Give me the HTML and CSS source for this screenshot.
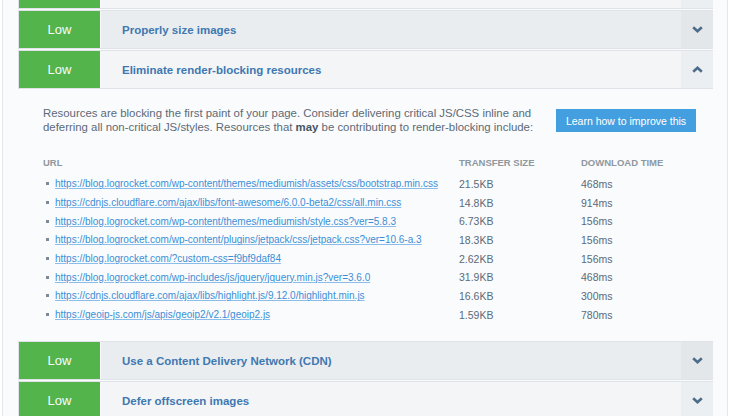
FILE: index.html
```html
<!DOCTYPE html>
<html>
<head>
<meta charset="utf-8">
<link rel="stylesheet" href="styles.css">
</head>
<body>
<div class="page">
  <div class="list">
    <div class="row light">
      <div class="badge"></div>
      <div class="title"></div>
      <div class="toggle"><svg width="11" height="7" viewBox="0 0 11 7"><polyline points="1.2,1.2 5.5,5.2 9.8,1.2" /></svg></div>
    </div>
    <div class="row shade">
      <div class="badge">Low</div>
      <div class="title">Properly size images</div>
      <div class="toggle"><svg width="11" height="7" viewBox="0 0 11 7"><polyline points="1.2,1.2 5.5,5.2 9.8,1.2" /></svg></div>
    </div>
    <div class="row light">
      <div class="badge">Low</div>
      <div class="title">Eliminate render-blocking resources</div>
      <div class="toggle"><svg width="11" height="7" viewBox="0 0 11 7"><polyline points="1.2,5.8 5.5,1.8 9.8,5.8" /></svg></div>
    </div>
    <div class="detail">
      <div class="intro">
        <p class="desc">Resources are blocking the first paint of your page. Consider delivering critical JS/CSS inline and deferring all non-critical JS/styles. Resources that <b>may</b> be contributing to render-blocking include:</p>
        <a class="learn">Learn how to improve this</a>
      </div>
      <div class="table">
        <div class="th">URL</div><div class="th">Transfer Size</div><div class="th">Download Time</div>
        <div class="url"><a>https://blog.logrocket.com/wp-content/themes/mediumish/assets/css/bootstrap.min.css</a></div><div class="num">21.5KB</div><div class="num">468ms</div>
        <div class="url"><a>https://cdnjs.cloudflare.com/ajax/libs/font-awesome/6.0.0-beta2/css/all.min.css</a></div><div class="num">14.8KB</div><div class="num">914ms</div>
        <div class="url"><a>https://blog.logrocket.com/wp-content/themes/mediumish/style.css?ver=5.8.3</a></div><div class="num">6.73KB</div><div class="num">156ms</div>
        <div class="url"><a>https://blog.logrocket.com/wp-content/plugins/jetpack/css/jetpack.css?ver=10.6-a.3</a></div><div class="num">18.3KB</div><div class="num">156ms</div>
        <div class="url"><a>https://blog.logrocket.com/?custom-css=f9bf9daf84</a></div><div class="num">2.62KB</div><div class="num">156ms</div>
        <div class="url"><a>https://blog.logrocket.com/wp-includes/js/jquery/jquery.min.js?ver=3.6.0</a></div><div class="num">31.9KB</div><div class="num">468ms</div>
        <div class="url"><a>https://cdnjs.cloudflare.com/ajax/libs/highlight.js/9.12.0/highlight.min.js</a></div><div class="num">16.6KB</div><div class="num">300ms</div>
        <div class="url"><a>https://geoip-js.com/js/apis/geoip2/v2.1/geoip2.js</a></div><div class="num">1.59KB</div><div class="num">780ms</div>
      </div>
    </div>
    <div class="row shade">
      <div class="badge">Low</div>
      <div class="title">Use a Content Delivery Network (CDN)</div>
      <div class="toggle"><svg width="11" height="7" viewBox="0 0 11 7"><polyline points="1.2,1.2 5.5,5.2 9.8,1.2" /></svg></div>
    </div>
    <div class="row light">
      <div class="badge">Low</div>
      <div class="title">Defer offscreen images</div>
      <div class="toggle"><svg width="11" height="7" viewBox="0 0 11 7"><polyline points="1.2,1.2 5.5,5.2 9.8,1.2" /></svg></div>
    </div>
  </div>
</div>
</body>
</html>
```

FILE: styles.css
```css
html, body {
  margin: 0;
  padding: 0;
  background: #ffffff;
  height: 100%;
  overflow: hidden;
}
body {
  font-family: "Liberation Sans", Arial, sans-serif;
}
.page {
  margin-left: 2px;
  width: 726px;
  min-height: 100%;
  border-left: 1px solid #e4e7ea;
  border-right: 1px solid #e4e7ea;
  background: #fafbfc;
  padding: 0 14px 0 15px;
  box-sizing: border-box;
}
.list {
  margin-top: -30px;
  display: flex;
  flex-direction: column;
  gap: 1px;
}
.row {
  display: flex;
  height: 39px;
  box-sizing: border-box;
  border: 1px solid #dfe3e7;
  border-right: none;
  background: #fafbfc;
}
.badge {
  width: 81px;
  background: #52b44b;
  color: #fbfbff;
  font-size: 13px;
  display: flex;
  align-items: center;
  justify-content: center;
  margin-right: 1px;
}
.title {
  flex: 1;
  display: flex;
  align-items: center;
  padding-left: 21px;
  font-size: 11.5px;
  font-weight: bold;
  color: #3f78b1;
}
.toggle {
  width: 32px;
  display: flex;
  align-items: center;
  justify-content: center;
}
.toggle svg polyline {
  fill: none;
  stroke: #4d6c89;
  stroke-width: 2.6;
  stroke-linecap: butt;
  stroke-linejoin: miter;
}
.shade .title { background: #eaedf0; }
.shade .toggle { background: #e3e7ea; }
.light .title { background: #f3f5f7; }
.light .toggle { background: #eceff1; }

.detail {
  padding: 16px 17px 16px 25px;
  height: 218px;
}
.intro {
  display: flex;
  justify-content: space-between;
  align-items: flex-start;
}
.desc {
  margin: 0;
  width: 495px;
  font-size: 11.4px;
  line-height: 14px;
  color: #5b6a78;
}
.desc b { color: #455564; }
.learn {
  flex: none;
  margin-top: 3px;
  width: 140px;
  height: 23px;
  background: #449fe0;
  color: #ffffff;
  font-size: 10.5px;
  display: flex;
  align-items: center;
  justify-content: center;
}
.table {
  margin-top: 22px;
  display: grid;
  grid-template-columns: 416px 122px 1fr;
  grid-auto-rows: 18.67px;
  font-size: 10px;
  align-items: center;
}
.th {
  font-size: 9.5px;
  font-weight: bold;
  color: #8e989f;
  text-transform: uppercase;
  height: 21px;
  display: flex;
  align-items: center;
  margin-bottom: 5px;
}
.url {
  display: flex;
  align-items: center;
  padding-left: 3px;
}
.url::before {
  content: "";
  width: 3px;
  height: 3px;
  background: #7d8994;
  margin-right: 6px;
}
.url a {
  color: #3b8fd7;
  text-decoration: underline;
  text-decoration-color: #8cbde8;
}
.num {
  color: #5b6a78;
  font-size: 10.5px;
}
```
